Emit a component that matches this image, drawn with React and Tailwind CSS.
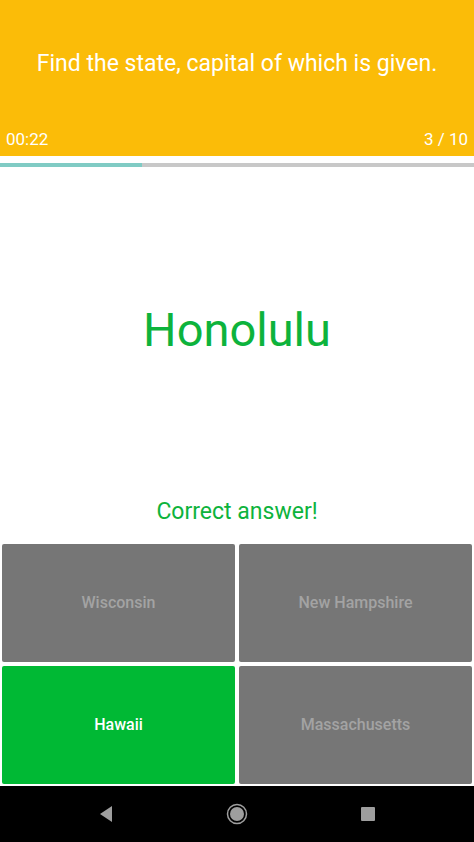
import React from 'react';

const answers = [
  { id: 1, label: 'Wisconsin', correct: false },
  { id: 2, label: 'New Hampshire', correct: false },
  { id: 3, label: 'Hawaii', correct: true },
  { id: 4, label: 'Massachusetts', correct: false },
];

const App = () => {
  const current = 3;
  const total = 10;

  return (
    <div className="h-[842px] w-full flex flex-col bg-white font-['Roboto','Liberation_Sans',sans-serif]">
      {/* Question header */}
      <div className="h-[156px] bg-[#FBBC08] flex flex-col text-white">
        <div className="flex-1 flex items-center justify-center px-4">
          <p className="text-[23px] leading-[28px] text-center">Find the state, capital of which is given.</p>
        </div>
        <div className="flex justify-between items-end px-[6px] pb-[6px] text-[17px] leading-[22px]">
          <span>00:22</span>
          <span>{current} / {total}</span>
        </div>
      </div>

      {/* Progress */}
      <div className="mt-[7px] h-[4px] bg-[#C8C8C8] flex">
        <div className="h-full w-[142px] bg-[#80CBC4]" />
      </div>

      {/* Capital */}
      <div className="h-[375px] flex flex-col">
        <div className="flex-1 flex items-center justify-center pt-[4px]">
          <h1 className="text-[47px] leading-[54px] text-[#0DB33C]">Honolulu</h1>
        </div>
        <div className="pt-[8px] pb-[15px] text-center">
          <p className="text-[23px] leading-[30px] text-[#0DB33C]">Correct answer!</p>
        </div>
      </div>

      {/* Answers */}
      <div className="grid grid-cols-2 gap-[4px] p-[2px]">
        {answers.map((a) => (
          <button
            key={a.id}
            className={
              a.correct
                ? 'h-[118px] rounded-[2px] bg-[#00B934] text-white text-[16px] font-medium'
                : 'h-[118px] rounded-[2px] bg-[#767676] text-[#A3A3A3] text-[16px] font-medium'
            }
          >
            {a.label}
          </button>
        ))}
      </div>

      {/* Android nav bar */}
      <div className="flex-1 bg-black flex items-center justify-between px-[98px]">
        <svg width="16" height="18" viewBox="0 0 16 18">
          <path d="M14 1 L2 9 L14 17 Z" fill="#9E9E9E" />
        </svg>
        <svg width="22" height="22" viewBox="0 0 22 22">
          <circle cx="11" cy="11" r="9.5" fill="none" stroke="#9E9E9E" strokeWidth="1.5" />
          <circle cx="11" cy="11" r="7" fill="#9E9E9E" />
        </svg>
        <svg width="16" height="16" viewBox="0 0 16 16">
          <rect x="1" y="1" width="14" height="14" rx="1" fill="#9E9E9E" />
        </svg>
      </div>
    </div>
  );
};

export default App;
